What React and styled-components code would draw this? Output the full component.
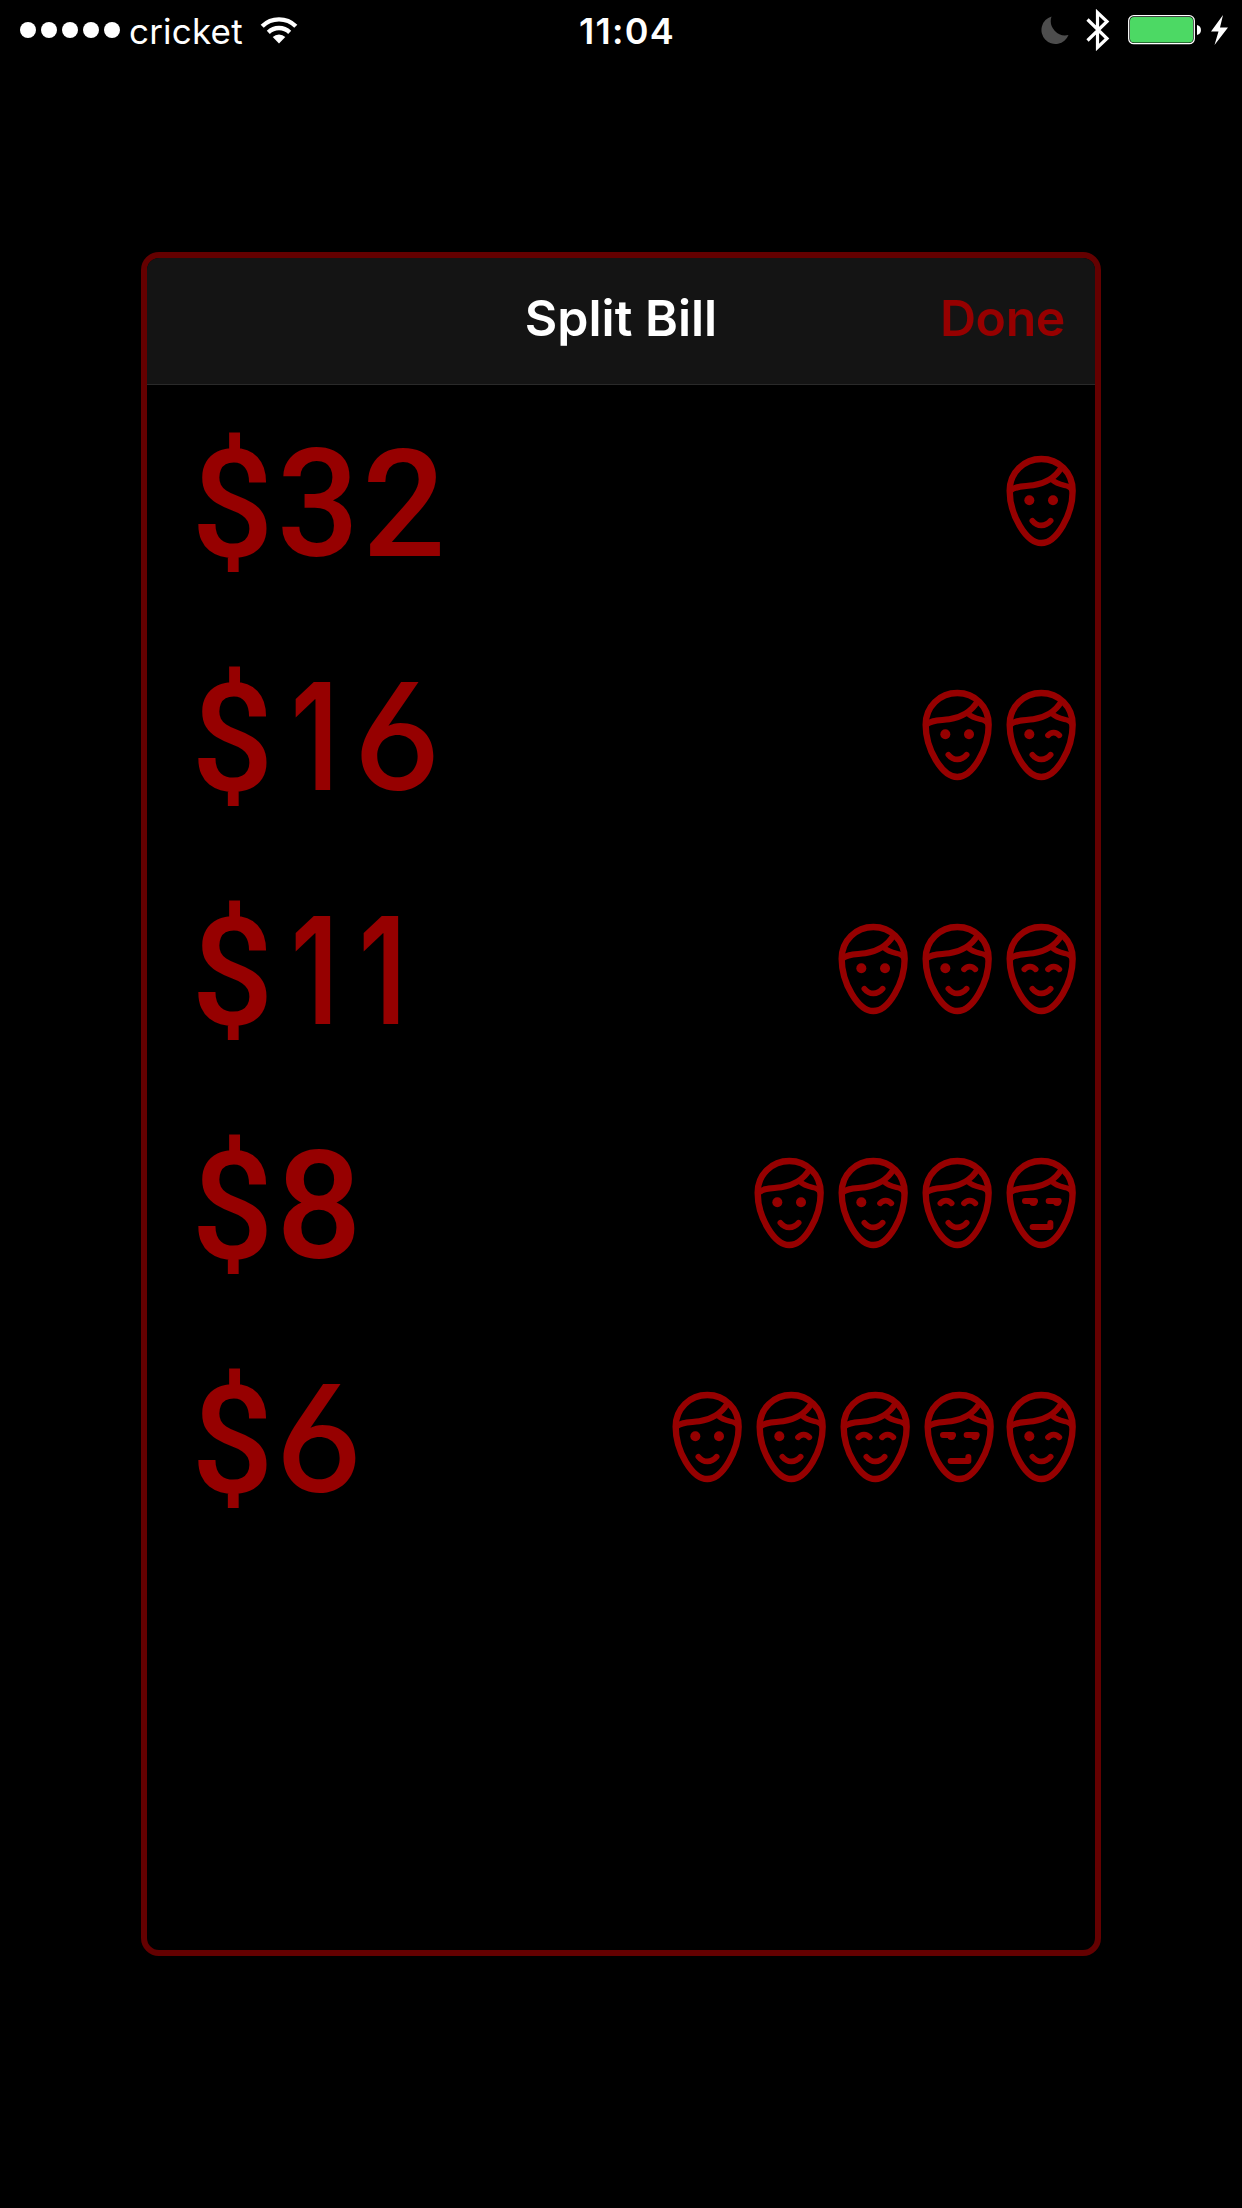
import React from "react";
import styled, { createGlobalStyle } from "styled-components";

const GlobalStyle = createGlobalStyle`
  * { box-sizing: border-box; }
  body { margin: 0; background: #000; font-family: Inter, "Liberation Sans", sans-serif; }
`;

const Screen = styled.div`
  width: 1242px;
  height: 2208px;
  background: #000;
  color: #fff;
  display: flex;
  flex-direction: column;
  align-items: center;
  overflow: hidden;
`;

const StatusBar = styled.header`
  width: 100%;
  height: 60px;
  display: grid;
  grid-template-columns: 1fr auto 1fr;
  align-items: center;
  padding: 0 14px 0 20px;
  margin-bottom: 192px;
`;

const StatusGroup = styled.div`
  display: flex;
  align-items: center;
  justify-content: ${(p) => (p.$end ? "flex-end" : "flex-start")};
`;

const Signal = styled.div`
  display: flex;
  gap: 5px;
  margin-right: 9px;
`;

const Dot = styled.span`
  width: 16px;
  height: 16px;
  border-radius: 50%;
  background: #fff;
`;

const Carrier = styled.span`
  font-size: 35px;
  line-height: 44px;
  font-weight: 400;
  width: 131px;
  padding-top: 2px;
  letter-spacing: 0.2px;
`;

const Time = styled.span`
  font-size: 36px;
  line-height: 44px;
  font-weight: 600;
  letter-spacing: 1.3px;
  padding: 2px 0 0 6px;
`;

const Icon = styled.svg`
  display: block;
  flex: none;
  margin-left: ${(p) => p.$gap || 0}px;
`;

const Panel = styled.main`
  width: 960px;
  height: 1704px;
  border: 6px solid #640000;
  border-radius: 18px;
  overflow: hidden;
`;

const PanelHeader = styled.div`
  height: 127px;
  background: #141414;
  border-bottom: 1px solid #2a2a2a;
  display: grid;
  grid-template-columns: 1fr auto 1fr;
  align-items: center;
  padding: 0 30px 6px;
`;

const Title = styled.h1`
  grid-column: 2;
  margin: 0;
  font-size: 50px;
  line-height: 60px;
  font-weight: 600;
`;

const DoneButton = styled.button`
  justify-self: end;
  border: 0;
  padding: 0;
  background: none;
  color: #960000;
  font: 600 50px/60px Inter, "Liberation Sans", sans-serif;
  letter-spacing: -0.4px;
`;

const List = styled.ul`
  list-style: none;
  margin: 0;
  padding: 0;
`;

const Row = styled.li`
  height: 234px;
  display: flex;
  justify-content: space-between;
  align-items: center;
  padding: 0 18px 0 46px;
  color: #960000;
`;

const Amount = styled.div`
  display: flex;
  align-items: baseline;
  padding-top: 2px;
  line-height: 180px;
  font-weight: 500;

  &::before {
    content: "\\200b";
    width: 0;
    font-size: 149px;
  }
`;

const Glyph = styled.span`
  display: flex;
  justify-content: center;
  width: ${(p) => p.$width}px;
  padding-left: ${(p) => p.$inset || 0}px;
  font-family: ${(p) => p.$font}, "Liberation Sans", sans-serif;
  font-size: ${(p) => p.$size}px;
  font-weight: ${(p) => p.$weight || 500};
  font-feature-settings: "ss01" 1;
  transform: scaleX(${(p) => p.$stretch || 1});

  &:nth-child(3) {
    margin-left: ${(p) => p.$kern || 0}px;
  }
`;

const glyphs = {
  $: { $width: 79, $font: "Roboto", $size: 151, $stretch: 0.96 },
  1: { $width: 78, $font: "Inter", $size: 149, $weight: 600, $kern: -10, $stretch: 0.76, $inset: 9 },
  2: { $width: 90, $font: "Roboto", $size: 151, $stretch: 0.97, $inset: 4 },
  3: { $width: 85, $font: "Roboto", $size: 151, $stretch: 0.96, $inset: 7 },
  6: { $width: 91, $font: "Inter", $size: 149, $inset: 4 },
  8: { $width: 92, $font: "Roboto", $size: 151, $inset: 2 },
};

const Faces = styled.div`
  display: flex;
  gap: 12px;
  padding-bottom: 2px;

  & > :nth-child(5) {
    margin-left: -1.5px;
  }
`;

const Line = styled.path`
  fill: none;
  stroke: currentColor;
  stroke-width: ${(p) => p.$w};
  stroke-linecap: round;
  stroke-linejoin: round;
`;

const eyes = {
  open: (x) => <circle cx={x} cy="181" r="15" fill="currentColor" />,
  closed: (x) => <Line $w={17} d={`M${x - 15} 184C${x - 6} 173 ${x + 10} 173 ${x + 19} 184`} />,
  side: (x) => (
    <>
      <Line $w={18} d={`M${x - 13} 177H${x + 17}`} />
      <circle cx={x + 12} cy="180" r="12" fill="currentColor" />
    </>
  ),
};

const moods = {
  happy: ["open", "open"],
  wink: ["open", "closed"],
  joyful: ["closed", "closed"],
  smirk: ["side", "side"],
};

function Face({ mood }) {
  const [left, right] = moods[mood];
  return (
    <Icon width="72" height="94" viewBox="45 42 216 282">
      <Line $w={19} d="M59 152C59 97 102 57 154 57S248 97 248 152C248 224 200 309 154 309S59 224 59 152Z" />
      <Line $w={18} d="M61 152C75 138 100 140 130 136C165 131 197 112 213 84" />
      <Line $w={16} d="M187 120C200 132 216 134 231 138C240 141 246 147 247 157" />
      {eyes[left](118)}
      {eyes[right](189)}
      {mood === "smirk" ? (
        <Line $w={18} d="M128 255H181V243" />
      ) : (
        <Line $w={17} d="M127 242C142 261 166 261 182 242" />
      )}
    </Icon>
  );
}

const rows = [
  { amount: "$32", faces: ["happy"] },
  { amount: "$16", faces: ["happy", "wink"] },
  { amount: "$11", faces: ["happy", "wink", "joyful"] },
  { amount: "$8", faces: ["happy", "wink", "joyful", "smirk"] },
  { amount: "$6", faces: ["happy", "wink", "joyful", "smirk", "wink"] },
];

export default function App() {
  return (
    <Screen>
      <GlobalStyle />
      <StatusBar>
        <StatusGroup>
          <Signal>
            {[0, 1, 2, 3, 4].map((i) => (
              <Dot key={i} />
            ))}
          </Signal>
          <Carrier>cricket</Carrier>
          <Icon width="38" height="28" viewBox="0 0 38 28">
            <path d="M2.2 10.2A24 24 0 0 1 35.8 10.2" fill="none" stroke="#fff" strokeWidth="4.4" />
            <path d="M8.3 16.3A15.5 15.5 0 0 1 29.7 16.3" fill="none" stroke="#fff" strokeWidth="4.4" />
            <path d="M12.7 21A9 9 0 0 1 25.3 21L19 27.5Z" fill="#fff" />
          </Icon>
        </StatusGroup>
        <Time>11:04</Time>
        <StatusGroup $end>
          <Icon width="28" height="28" viewBox="0 0 28 28">
            <path d="M10.5 0.5A14 14 0 1 0 27.5 19A14.5 14.5 0 0 1 10.5 0.5Z" fill="#4d4d4d" />
          </Icon>
          <Icon $gap={17} width="24" height="42" viewBox="0 0 24 42">
            <path d="M1.5 10.5L21 29.5L11.5 38.5V3.5L21 12.5L1.5 31.5" fill="none" stroke="#fff" strokeWidth="3.2" />
          </Icon>
          <Icon $gap={18} width="74" height="30" viewBox="0 0 74 30">
            <rect x="0.7" y="0.7" width="65.6" height="28" rx="5" fill="none" stroke="#fff" strokeWidth="1.3" />
            <rect x="2" y="2" width="63" height="25.4" rx="4" fill="#4cd964" />
            <path d="M69 10C74.3 11 74.3 19 69 20Z" fill="#fff" />
          </Icon>
          <Icon $gap={9} width="17" height="30" viewBox="0 0 17 30">
            <path d="M12 0L0 16.5H7.5L3.5 30L17 12.5H9Z" fill="#fff" />
          </Icon>
        </StatusGroup>
      </StatusBar>
      <Panel>
        <PanelHeader>
          <Title>Split Bill</Title>
          <DoneButton>Done</DoneButton>
        </PanelHeader>
        <List>
          {rows.map((row) => (
            <Row key={row.amount}>
              <Amount>
                {[...row.amount].map((ch, i) => (
                  <Glyph key={i} {...glyphs[ch]}>{ch}</Glyph>
                ))}
              </Amount>
              <Faces>
                {row.faces.map((mood, i) => (
                  <Face key={i} mood={mood} />
                ))}
              </Faces>
            </Row>
          ))}
        </List>
      </Panel>
    </Screen>
  );
}
